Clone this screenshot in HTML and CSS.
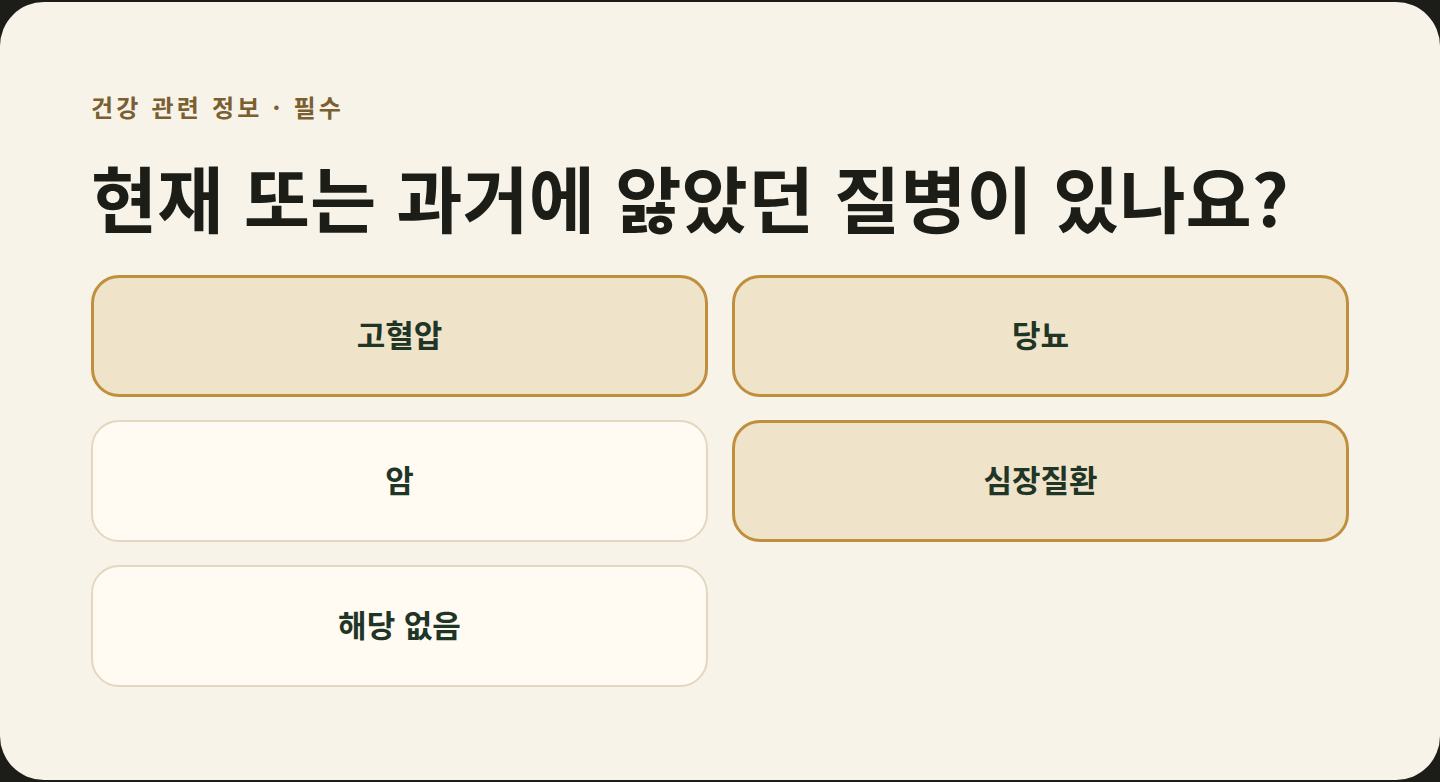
FILE: index.html
```html
<!DOCTYPE html>
<html lang="ko">
<head>
	<meta charset="UTF-8">
	<title>질병 이력</title>
	<link rel="stylesheet" href="styles.css">
</head>
<body>
	<div class="card">
		<div class="eyebrow">건강 관련 정보 · 필수</div>
		<h1 class="title">현재 또는 과거에 앓았던 질병이 있나요?</h1>
		<div class="options">
			<div class="option selected">고혈압</div>
			<div class="option selected">당뇨</div>
			<div class="option">암</div>
			<div class="option selected">심장질환</div>
			<div class="option">해당 없음</div>
		</div>
	</div>
</body>
</html>
```

FILE: styles.css
```css
html,body{margin:0;padding:0;}
body{background-color:#1c1d18;width:1440px;height:782px;overflow:hidden;
	font-family:"Noto Sans CJK KR","Noto Sans",sans-serif;}
.card{box-sizing:border-box;margin-top:2px;width:1440px;height:778px;
	background-color:#f7f3e9;border-radius:44px;padding:90px 91px 0 91px;}
.eyebrow{font-size:24px;font-weight:700;color:#7a5f30;letter-spacing:3.2px;line-height:30px;}
.title{margin:29px 0 0 0;font-size:72px;font-weight:700;color:#1c1d17;line-height:90px;}
.options{display:grid;grid-template-columns:1fr 1fr;grid-auto-rows:122px;gap:23px 24px;margin-top:34px;}
.option{box-sizing:border-box;display:flex;align-items:center;justify-content:center;padding-bottom:5px;
	border:2px solid #e3d7bf;background-color:#fffaf2;border-radius:28px;
	font-size:31px;font-weight:700;color:#1f3526;}
.option.selected{border:3px solid #c08f3e;background-color:#efe3c9;}
```
